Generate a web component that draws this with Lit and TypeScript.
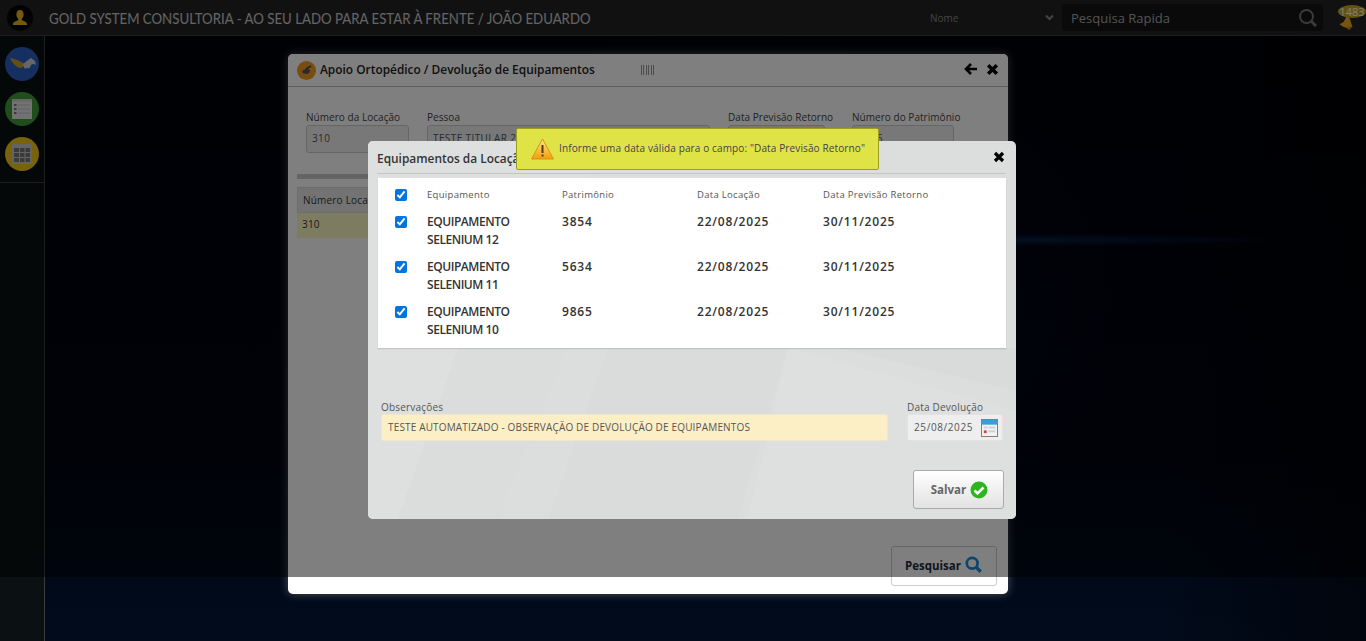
import { LitElement, html, css, svg } from 'lit';
import { customElement } from 'lit/decorators.js';

const rows = [
  { name: 'EQUIPAMENTO SELENIUM 12', code: '3854' },
  { name: 'EQUIPAMENTO SELENIUM 11', code: '5634' },
  { name: 'EQUIPAMENTO SELENIUM 10', code: '9865' },
];

const cross = (size: number) => svg`
  <svg width=${size} height=${size} viewBox="0 0 12 12">
    <path d="M2 2l8 8M10 2l-8 8" stroke="#000" stroke-width="3.2" fill="none" />
  </svg>`;

@customElement('app-root')
export class AppRoot extends LitElement {
  static styles = css`
    :host {
      display: block;
      position: relative;
      width: 1366px;
      height: 641px;
      overflow: hidden;
      font-family: 'Open Sans', 'Noto Sans', sans-serif;
      color: #333;
      background:
        radial-gradient(ellipse 260px 6px at 1030px 240px, rgba(25, 85, 190, 0.3), transparent),
        radial-gradient(ellipse 420px 270px at 720px 300px, rgba(8, 22, 60, 0.4), transparent),
        linear-gradient(90deg, rgba(0, 0, 0, 0) 85%, rgba(0, 0, 0, 0.5) 100%),
        linear-gradient(180deg, #000209 0%, #000410 70%, #010a1a 92%, #020b1b 100%);
    }
    .topbar {
      display: flex;
      align-items: center;
      height: 35px;
      background: #232323;
      border-bottom: 1px solid #3a3a3a;
    }
    .avatar {
      width: 26px;
      height: 26px;
      margin-left: 7px;
      border-radius: 50%;
      background: #050505;
      display: flex;
      align-items: center;
      justify-content: center;
    }
    .title {
      margin-left: 16px;
      width: 881px;
      font-family: Lato, sans-serif;
      font-size: 15px;
      color: #fff;
      opacity: 0.75;
      white-space: nowrap;
      transform: scaleX(0.883);
      transform-origin: left center;
    }
    .field-name {
      width: 132px;
      display: flex;
      justify-content: space-between;
      align-items: center;
      font-size: 10px;
      color: #888;
      padding-right: 8px;
      box-sizing: border-box;
    }
    .search {
      width: 261px;
      height: 27px;
      background: #141414;
      border-radius: 3px;
      display: flex;
      align-items: center;
      justify-content: space-between;
      box-sizing: border-box;
      padding: 0 5px 0 9px;
      font-size: 13px;
      color: #aaa;
    }
    .bell {
      position: relative;
      margin-left: 15px;
      width: 28px;
      height: 30px;
    }
    .bell span {
      position: absolute;
      left: 0;
      top: 2px;
      width: 28px;
      height: 13px;
      border-radius: 50%;
      background: #c9a616;
      color: #fff;
      font-size: 11px;
      line-height: 13px;
      text-align: center;
    }
    .bell svg {
      position: absolute;
      left: 0;
      top: 14px;
    }
    .body {
      display: flex;
      height: 605px;
    }
    .sidebar {
      width: 44px;
      background: #0b1012;
      border-right: 1px solid #3c3c3c;
    }
    .apps {
      display: flex;
      flex-direction: column;
      align-items: center;
      gap: 11px;
      padding: 11px 0;
      border-bottom: 1px solid #3c3c3c;
      height: 124px;
    }
    .apps svg {
      display: block;
    }

    .window {
      position: absolute;
      left: 288px;
      top: 54px;
      width: 720px;
      height: 540px;
      background: #fff;
      border-radius: 5px;
      box-shadow: 0 0 10px rgba(255, 255, 255, 0.3);
      display: flex;
      flex-direction: column;
    }
    .win-head {
      display: flex;
      align-items: center;
      height: 32px;
      flex: none;
      padding: 0 9px;
      border-bottom: 1px solid #bdbdbd;
      background: #fff;
      border-radius: 5px 5px 0 0;
      font-size: 11.9px;
      font-weight: 600;
      color: #222;
    }
    .win-head .t {
      margin: -2px 0 0 4px;
      width: 321px;
    }
    .bars {
      width: 15px;
      height: 10px;
      margin-top: -1px;
      background: repeating-linear-gradient(90deg, #999 0 1px, transparent 1px 2.5px);
    }
    .win-actions {
      margin: -2px 0 0 auto;
      display: flex;
      align-items: center;
      gap: 8px;
    }
    .fields {
      display: flex;
      padding: 24px 0 0 18px;
      gap: 18px;
    }
    .field label {
      display: block;
      font-size: 10px;
      line-height: 13px;
      letter-spacing: 0.04px;
      color: #444;
      white-space: nowrap;
    }
    .box {
      box-sizing: border-box;
      height: 28px;
      margin-top: 1px;
      border: 1px solid #ccc;
      border-radius: 3px;
      background: #f0f0f0;
      padding: 0 5px;
      font-size: 10px;
      letter-spacing: 0.4px;
      line-height: 24px;
      color: #555;
      white-space: nowrap;
      overflow: hidden;
    }
    .rule {
      height: 5px;
      margin: 21px 0 0 9px;
      width: 690px;
      background: #c9c9c9;
    }
    .win-table {
      margin: 8px 0 0 9px;
      width: 702px;
      font-size: 10px;
      letter-spacing: 0.2px;
      color: #333;
    }
    .win-table .h {
      height: 26px;
      line-height: 24px;
      padding-left: 5px;
      border: 1px solid #d8d8d8;
      box-sizing: border-box;
      background: #e6e6e6;
    }
    .win-table .r {
      height: 25px;
      line-height: 23px;
      padding-left: 5px;
      background: #fbf8c0;
    }
    .win-foot {
      margin-top: auto;
      display: flex;
      justify-content: flex-end;
      padding: 0 11px 8px 0;
    }
    .btn {
      display: flex;
      align-items: center;
      justify-content: center;
      gap: 4px;
      box-sizing: border-box;
      border: 1px solid #bbb;
      border-radius: 3px;
      font-size: 11.5px;
      font-weight: 700;
    }
    .btn.search-btn {
      width: 106px;
      height: 40px;
      padding: 0 0 2px 0;
      background: transparent;
      color: #1f2a3a;
      border-color: #ccc;
    }

    .overlay {
      position: absolute;
      left: 0;
      top: 0;
      width: 100%;
      height: 577px;
      background: rgba(0, 0, 0, 0.5);
    }

    .modal {
      position: absolute;
      left: 368px;
      top: 141px;
      width: 648px;
      height: 378px;
      box-sizing: border-box;
      padding: 0 10px 0 9px;
      background: #dcdedd;
      border-radius: 5px;
      overflow: hidden;
      display: flex;
      flex-direction: column;
    }
    .facets {
      position: absolute;
      inset: 0;
    }
    .modal > *:not(.facets) {
      position: relative;
    }
    .modal-head {
      display: flex;
      align-items: center;
      justify-content: space-between;
      flex: none;
      height: 32px;
      padding-right: 1px;
      border-bottom: 1px solid #c4c6c5;
      font-size: 11.9px;
      font-weight: 600;
      color: #333;
    }
    .modal-head span {
      padding-top: 2px;
    }
    .panel {
      margin: 4px 0 0 1px;
      padding: 8px 0 0;
      height: 170px;
      box-sizing: border-box;
      background: #fff;
      box-shadow: 0 1px 1px rgba(0, 0, 0, 0.12);
    }
    .grid {
      display: grid;
      grid-template-columns: 49px 135px 135px 126px 1fr;
    }
    .grid > div {
      padding-right: 30px;
    }
    .cell-check {
      padding-left: 17px;
      padding-right: 0 !important;
    }
    .cell-check input {
      display: block;
      width: 12px;
      height: 12px;
      margin: 3px 0 0;
      accent-color: #0075e0;
    }
    .head {
      font-size: 9.5px;
      line-height: 18px;
      letter-spacing: 0.3px;
      color: #555;
      height: 27px;
    }
    .row {
      font-size: 12px;
      font-weight: 600;
      line-height: 18px;
      letter-spacing: -0.45px;
      color: #333;
      height: 45px;
    }
    .row .num {
      letter-spacing: 0.8px;
    }
    .form {
      display: flex;
      gap: 19px;
      margin-top: 51px;
      padding-left: 4px;
    }
    .form label {
      display: block;
      font-size: 10px;
      line-height: 14px;
      padding-top: 1px;
      letter-spacing: 0.2px;
      color: #555;
      white-space: nowrap;
    }
    .form .in {
      box-sizing: border-box;
      height: 27px;
      border: 1px solid #e2e2e2;
      border-radius: 2px;
      line-height: 25px;
      font-size: 10px;
      letter-spacing: 0.16px;
      color: #555;
      padding-left: 6px;
    }
    .obs {
      width: 507px;
      background: #fdefc5;
      border-color: #f1e6c8 !important;
    }
    .date {
      width: 96px;
      background: #eeeeee;
      display: flex;
      align-items: center;
      justify-content: space-between;
      padding-right: 4px;
      letter-spacing: 0.6px !important;
    }
    .modal-foot {
      display: flex;
      justify-content: flex-end;
      margin-top: 29px;
      padding-right: 2px;
    }
    .btn.save {
      width: 91px;
      height: 39px;
      gap: 4px;
      padding-left: 2px;
      border-color: #aaa;
      background: linear-gradient(180deg, #fff 0%, #e2e2e2 100%);
      color: #666;
    }

    .toast {
      position: absolute;
      left: 516px;
      top: 128px;
      width: 363px;
      height: 42px;
      box-sizing: border-box;
      display: flex;
      align-items: center;
      gap: 5px;
      padding-left: 14px;
      background: #e0e346;
      border: 1px solid #9b9c20;
      border-radius: 2px;
      font-size: 10px;
      letter-spacing: 0.125px;
      color: #444;
      white-space: nowrap;
    }
    .toast span {
      margin-top: -2px;
    }
  `;

  private facets() {
    return html`<svg class="facets" width="648" height="378" viewBox="0 0 648 378">
      <defs>
        <linearGradient id="warn" x1="0" y1="0" x2="0" y2="1">
          <stop offset="0" stop-color="#ffe98a" />
          <stop offset="1" stop-color="#f49d0c" />
        </linearGradient>
      </defs>
      <polygon points="0,0 240,0 60,378 0,378" fill="#dee0df" />
      <polygon points="90,207 200,207 130,378 30,378" fill="#dbdddc" />
      <polygon points="240,207 420,207 370,378 180,378" fill="#dadcdb" />
      <polygon points="420,207 648,270 648,378 380,378" fill="#dee0df" />
      <polygon points="470,207 648,207 648,250" fill="#d9dbda" />
    </svg>`;
  }

  render() {
    return html`
      <div class="topbar">
        <div class="avatar">
          <svg width="16" height="18" viewBox="0 0 16 18">
            <path d="M8 1c2.4 0 3.600 2 3.600 4.400 0 2-1 3.600-1.800 4.300v1.600c1.600.8 5 1.500 5.200 3.700v1H1v-1c.2-2.200 3.600-2.900 5.200-3.700V9.700C5.400 9 4.400 7.400 4.400 5.400 4.400 3 5.600 1 8 1z" fill="#e8b31c" />
          </svg>
        </div>
        <div class="title">GOLD SYSTEM CONSULTORIA - AO SEU LADO PARA ESTAR À FRENTE / JOÃO EDUARDO</div>
        <div class="field-name">
          <span>Nome</span>
          <svg width="9" height="7" viewBox="0 0 9 7"><path d="M1 1.500l3.500 3.500L8 1.500" stroke="#888" stroke-width="2" fill="none" /></svg>
        </div>
        <div class="search">
          <span>Pesquisa Rapida</span>
          <svg width="20" height="20" viewBox="0 0 20 20">
            <circle cx="8.500" cy="8.500" r="6.500" stroke="#777" stroke-width="2" fill="none" />
            <path d="M13 13l5 5" stroke="#777" stroke-width="3" />
          </svg>
        </div>
        <div class="bell">
          <svg width="16" height="13" viewBox="0 0 16 13">
            <path d="M8 0c3-.5 4 1.500 4.500 4l2 6c-4 2-9 1-13-3 2-.5 4-1.500 5-3.500z" fill="#e8ab24" />
            <circle cx="11" cy="11" r="1.800" fill="#c98a10" />
          </svg>
          <span>1483</span>
        </div>
      </div>
      <div class="body">
        <div class="sidebar">
          <div class="apps">
            <svg width="34" height="34" viewBox="0 0 34 34">
              <circle cx="17" cy="17" r="17" fill="#2a5fc0" />
              <path d="M5 11c6 1 12 4 16 7l-5 3c-4 0-9-5-11-10z" fill="#c9a02a" />
              <path d="M18 17l5-4 3-2 4 3 1 4-2.500-1-2 .5-2 3.500-5 .5z" fill="#c8ccd2" />
            </svg>
            <svg width="34" height="34" viewBox="0 0 34 34">
              <circle cx="17" cy="17" r="17" fill="#3f9a36" />
              <rect x="7" y="7" width="20" height="20" fill="#e4e4e4" />
              <rect x="7" y="7" width="20" height="2.500" fill="#cfcfcf" />
              <path d="M9 12h2.500v2H9zM9 16h2.500v2H9zM9 20h2.500v2H9z" fill="#777" />
              <path d="M13 13h12M13 17h12M13 21h12" stroke="#c4c4c4" />
            </svg>
            <svg width="34" height="34" viewBox="0 0 34 34">
              <circle cx="17" cy="17" r="17" fill="#f2c418" />
              <rect x="7" y="7" width="20" height="20" fill="#c9c9c9" />
              <path d="M9 11h5v4H9zM15 11h4.500v4H15zM20.500 11H25v4h-4.500zM9 16h5v4H9zM15 16h4.500v4H15zM20.500 16H25v4h-4.500zM9 21h5v4H9zM15 21h4.500v4H15zM20.500 21H25v4h-4.500z" fill="#777" />
            </svg>
          </div>
        </div>
      </div>

      <div class="window">
        <div class="win-head">
          <svg width="19" height="19" viewBox="0 0 19 19">
            <circle cx="9.500" cy="9.500" r="9.500" fill="#ee9a22" />
            <path d="M5 11c1-3 5-4 8-2 0 3-2 4-4 4s-3-1-4-2z" fill="#555" />
            <path d="M9 8l5-3" stroke="#444" stroke-width="1.500" />
          </svg>
          <span class="t">Apoio Ortopédico / Devolução de Equipamentos</span>
          <span class="bars"></span>
          <span class="win-actions">
            <svg width="14" height="12" viewBox="0 0 14 12"><path d="M13 6H3M7 1L2 6l5 5" stroke="#000" stroke-width="2.600" fill="none" /></svg>
            ${cross(13)}
          </span>
        </div>
        <div class="fields">
          <div class="field" style="width:103px"><label>Número da Locação</label><div class="box">310</div></div>
          <div class="field" style="width:283px"><label>Pessoa</label><div class="box">TESTE TITULAR 2</div></div>
          <div class="field" style="width:97px"><label>Data Previsão Retorno</label><div class="box" style="background:#fdefc5"></div></div>
          <div class="field" style="width:102px;margin-left:9px"><label>Número do Patrimônio</label><div class="box" style="padding-left:24px">5</div></div>
        </div>
        <div class="rule"></div>
        <div class="win-table">
          <div class="h">Número Locação</div>
          <div class="r">310</div>
        </div>
        <div class="win-foot">
          <div class="btn search-btn">
            Pesquisar
            <svg width="18" height="18" viewBox="0 0 20 20">
              <circle cx="8" cy="8" r="6" stroke="#1e88d8" stroke-width="3" fill="none" />
              <path d="M12.500 12.500l5 5" stroke="#1e88d8" stroke-width="3.600" />
            </svg>
          </div>
        </div>
      </div>

      <div class="overlay"></div>

      <div class="modal">
        ${this.facets()}
        <div class="modal-head">
          <span>Equipamentos da Locação</span>
          ${cross(12)}
        </div>
        <div class="panel">
          <div class="grid head">
            <div class="cell-check"><input type="checkbox" checked /></div>
            <div>Equipamento</div>
            <div>Patrimônio</div>
            <div>Data Locação</div>
            <div>Data Previsão Retorno</div>
          </div>
          ${rows.map(
            (r) => html`<div class="grid row">
              <div class="cell-check"><input type="checkbox" checked /></div>
              <div>${r.name}</div>
              <div class="num">${r.code}</div>
              <div class="num">22/08/2025</div>
              <div class="num">30/11/2025</div>
            </div>`,
          )}
        </div>
        <div class="form">
          <div>
            <label>Observações</label>
            <div class="in obs">TESTE AUTOMATIZADO - OBSERVAÇÃO DE DEVOLUÇÃO DE EQUIPAMENTOS</div>
          </div>
          <div>
            <label>Data Devolução</label>
            <div class="in date">
              25/08/2025
              <svg width="17" height="19" viewBox="0 0 18 20">
                <rect x="0.500" y="1.500" width="17" height="18" fill="#f1f1f1" stroke="#8a7468" />
                <rect x="1" y="2" width="16" height="5" fill="#3a9ede" />
                <rect x="3" y="9" width="4" height="2" fill="#c9d3da" />
                <rect x="8" y="9" width="7" height="2" fill="#c9d3da" />
                <rect x="3" y="13" width="3" height="3" fill="#d8433a" />
                <rect x="8" y="13" width="7" height="2" fill="#c9d3da" />
              </svg>
            </div>
          </div>
        </div>
        <div class="modal-foot">
          <div class="btn save">
            Salvar
            <svg width="18" height="18" viewBox="0 0 18 18">
              <circle cx="9" cy="9" r="8.500" fill="#2cb51c" />
              <path d="M4.500 9.500l3 3 6-6" stroke="#fff" stroke-width="2.600" fill="none" />
            </svg>
          </div>
        </div>
      </div>

      <div class="toast">
        <svg width="23" height="22" viewBox="0 0 23 22">
          <path d="M11.500 1L22.500 21H.5z" fill="url(#warn)" stroke="#d8950f" stroke-linejoin="round" />
          <path d="M11.500 7v8" stroke="#5a3b00" stroke-width="2" />
          <path d="M11.500 16.500v2" stroke="#5a3b00" stroke-width="2" />
        </svg>
        <span>Informe uma data válida para o campo: "Data Previsão Retorno"</span>
      </div>
    `;
  }
}
